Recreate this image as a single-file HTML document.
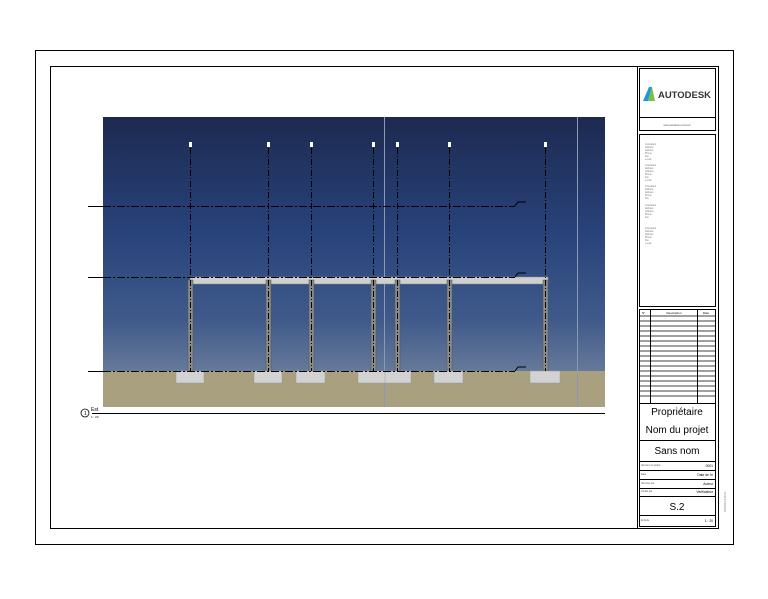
<!DOCTYPE html>
<html><head><meta charset="utf-8"><style>
body{margin:0;background:#fff;width:768px;height:594px;overflow:hidden;font-family:"Liberation Sans",sans-serif}
</style></head><body>
<svg width="768" height="594" xmlns="http://www.w3.org/2000/svg" font-family="Liberation Sans, sans-serif">
<defs>
<linearGradient id="sky" x1="0" y1="0" x2="0" y2="1">
<stop offset="0" stop-color="#1d2a50"/><stop offset="0.45" stop-color="#28427a"/><stop offset="0.8" stop-color="#3f5a8a"/><stop offset="1" stop-color="#66799a"/>
</linearGradient>
</defs>
<rect x="35.5" y="50.5" width="698" height="494" fill="none" stroke="#000"/>
<rect x="50.5" y="66.5" width="668" height="462" fill="none" stroke="#000"/>
<rect x="103" y="117" width="502" height="254" fill="url(#sky)"/>
<rect x="103" y="371" width="502" height="36" fill="#a8a07f"/>
<line x1="384.5" y1="117" x2="384.5" y2="407" stroke="#8a9ab5" stroke-width="1"/>
<line x1="577.5" y1="117" x2="577.5" y2="407" stroke="#8a9ab5" stroke-width="1"/>
<rect x="190" y="277" width="358" height="7" fill="#cfcfcf" stroke="#888" stroke-width="0.5"/>
<g fill="#8a8a8a" stroke="#555" stroke-width="0.5">
<rect x="188" y="280" width="5" height="91"/><rect x="266" y="280" width="5" height="91"/><rect x="309" y="280" width="5" height="91"/><rect x="371" y="280" width="5" height="91"/><rect x="395" y="280" width="5" height="91"/><rect x="447" y="280" width="5" height="91"/><rect x="543" y="280" width="5" height="91"/>
</g>
<g fill="#d2d2d2" stroke="#999" stroke-width="0.5">
<rect x="176" y="371" width="28" height="12"/><rect x="254" y="371" width="28" height="12"/><rect x="296" y="371" width="29" height="12"/><rect x="358" y="371" width="28" height="12"/><rect x="385" y="371" width="26" height="12"/><rect x="434" y="371" width="29" height="12"/><rect x="530" y="371" width="30" height="12"/>
</g>
<g stroke="#000" stroke-width="1" stroke-dasharray="6,2,1,2">
<line x1="190.5" y1="148" x2="190.5" y2="371"/><line x1="268.5" y1="148" x2="268.5" y2="371"/><line x1="311.5" y1="148" x2="311.5" y2="371"/><line x1="373.5" y1="148" x2="373.5" y2="371"/><line x1="397.5" y1="148" x2="397.5" y2="371"/><line x1="449.5" y1="148" x2="449.5" y2="371"/><line x1="545.5" y1="148" x2="545.5" y2="371"/>
</g>
<g fill="#fff"><rect x="189" y="142" width="3" height="5"/><rect x="267" y="142" width="3" height="5"/><rect x="310" y="142" width="3" height="5"/><rect x="372" y="142" width="3" height="5"/><rect x="396" y="142" width="3" height="5"/><rect x="448" y="142" width="3" height="5"/><rect x="544" y="142" width="3" height="5"/></g>
<g stroke="#000" stroke-width="1">
<line x1="88" y1="206.5" x2="103" y2="206.5"/><line x1="88" y1="277.5" x2="103" y2="277.5"/><line x1="88" y1="371.5" x2="103" y2="371.5"/>
<g stroke-dasharray="8,2,2,2"><line x1="103" y1="206.5" x2="515" y2="206.5"/><line x1="103" y1="277.5" x2="515" y2="277.5"/><line x1="103" y1="371.5" x2="515" y2="371.5"/></g>
<path d="M515 206 l3 -4 h8 M515 277 l3 -4 h8 M515 371 l3 -4 h8" fill="none"/>
</g>
<line x1="92" y1="413.5" x2="605" y2="413.5" stroke="#000"/>
<circle cx="85" cy="413" r="4" fill="none" stroke="#000" stroke-width="0.8"/>
<text x="84" y="415" font-size="5">1</text>
<text x="91" y="411" font-size="5">Est</text>
<text x="91" y="418" font-size="3">1 : 20</text>
<g fill="none" stroke="#000" stroke-width="1">
<rect x="637.5" y="66.5" width="81" height="462"/>
<rect x="639.5" y="68.5" width="76" height="62"/>
<line x1="639.5" y1="117.5" x2="715.5" y2="117.5"/>
<rect x="639.5" y="134.5" width="76" height="172"/>
<rect x="639.5" y="309.5" width="76" height="94"/>
<rect x="639.5" y="403.5" width="76" height="123"/>
<line x1="639.5" y1="440.5" x2="715.5" y2="440.5"/>
<line x1="639.5" y1="461.5" x2="715.5" y2="461.5"/>
<line x1="639.5" y1="470.5" x2="715.5" y2="470.5"/>
<line x1="639.5" y1="479.5" x2="715.5" y2="479.5"/>
<line x1="639.5" y1="488.5" x2="715.5" y2="488.5"/>
<line x1="639.5" y1="496.5" x2="715.5" y2="496.5"/>
<line x1="639.5" y1="515.5" x2="715.5" y2="515.5"/>
<line x1="650.5" y1="309" x2="650.5" y2="403"/>
<line x1="697.5" y1="309" x2="697.5" y2="403"/>
</g>
<g stroke="#000" stroke-width="0.7">
<line x1="640" y1="316" x2="715" y2="316"/><line x1="640" y1="321" x2="715" y2="321"/><line x1="640" y1="326" x2="715" y2="326"/><line x1="640" y1="331" x2="715" y2="331"/><line x1="640" y1="336" x2="715" y2="336"/><line x1="640" y1="341" x2="715" y2="341"/><line x1="640" y1="346" x2="715" y2="346"/><line x1="640" y1="351" x2="715" y2="351"/><line x1="640" y1="356" x2="715" y2="356"/><line x1="640" y1="361" x2="715" y2="361"/><line x1="640" y1="366" x2="715" y2="366"/><line x1="640" y1="371" x2="715" y2="371"/><line x1="640" y1="376" x2="715" y2="376"/><line x1="640" y1="381" x2="715" y2="381"/><line x1="640" y1="386" x2="715" y2="386"/><line x1="640" y1="391" x2="715" y2="391"/><line x1="640" y1="396" x2="715" y2="396"/>
</g>
<path d="M643 101 L649 87 L652 87 L648 101 Z" fill="#1d9ad6"/>
<path d="M648 101 L652 87 L655 101 Z" fill="#7ac143"/>
<text x="658" y="98" font-size="9.5" font-weight="bold" fill="#333" textLength="53" lengthAdjust="spacingAndGlyphs">AUTODESK</text>
<text x="677" y="126" font-size="2.5" fill="#555" text-anchor="middle">www.autodesk.com/revit</text>
<g font-size="2.3" fill="#777">
<text x="645" y="145">Consultant</text><text x="645" y="148">Address</text><text x="645" y="151">Address</text><text x="645" y="154">Phone</text><text x="645" y="157">Fax</text><text x="645" y="160">e-mail</text>
<text x="645" y="166">Consultant</text><text x="645" y="169">Address</text><text x="645" y="172">Address</text><text x="645" y="175">Phone</text><text x="645" y="178">Fax</text><text x="645" y="181">e-mail</text>
<text x="645" y="187">Consultant</text><text x="645" y="190">Address</text><text x="645" y="193">Address</text><text x="645" y="196">Phone</text><text x="645" y="199">Fax</text>
<text x="645" y="206">Consultant</text><text x="645" y="209">Address</text><text x="645" y="212">Address</text><text x="645" y="215">Phone</text><text x="645" y="218">Fax</text>
<text x="645" y="229">Consultant</text><text x="645" y="232">Address</text><text x="645" y="235">Address</text><text x="645" y="238">Phone</text><text x="645" y="241">Fax</text><text x="645" y="244">e-mail</text>
</g>
<text x="642" y="314" font-size="3">N°</text>
<text x="674" y="314" font-size="3" text-anchor="middle">Description</text>
<text x="706" y="314" font-size="3" text-anchor="middle">Date</text>
<text x="677" y="415" font-size="10" text-anchor="middle">Propriétaire</text>
<text x="677" y="433" font-size="10" text-anchor="middle">Nom du projet</text>
<text x="677" y="454" font-size="10" text-anchor="middle">Sans nom</text>
<g font-size="2.5" fill="#555"><text x="641" y="466">Numéro du projet</text><text x="641" y="475">Date</text><text x="641" y="484">Dessiné par</text><text x="641" y="492">Vérifié par</text><text x="641" y="521">Échelle</text></g>
<g font-size="3.3" text-anchor="end"><text x="713" y="467">0001</text><text x="713" y="476">Date de l'é</text><text x="713" y="485">Auteur</text><text x="713" y="493">Vérificateur</text><text x="713" y="522">1 : 20</text></g>
<text x="677" y="510" font-size="10" text-anchor="middle">S.2</text>
<text x="726" y="512" font-size="2.5" fill="#777" transform="rotate(-90 726 512)">00/00/00 00:00:00</text>
</svg>
</body></html>
